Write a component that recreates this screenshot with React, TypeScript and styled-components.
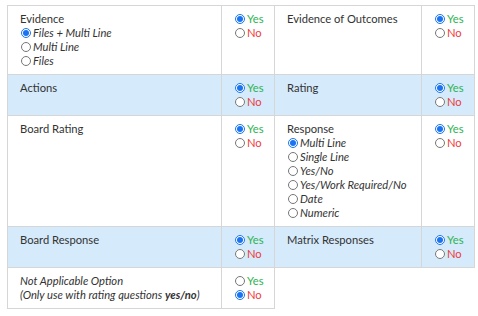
import React from 'react';
import styled, { createGlobalStyle } from 'styled-components';

const GlobalStyle = createGlobalStyle`
    body {
        margin: 0;
        background: #ffffff;
        font-family: Lato, 'Open Sans', sans-serif;
        color: #333333;
    }
`;

const Page = styled.div`
    padding: 5px 0 0 7px;
`;

const Settings_Table = styled.table`
    border-collapse: collapse;
    table-layout: fixed;
    width: 468px;
    font-size: 11.2px;
    line-height: 14px;
`;

const Row = styled.tr<{ $shaded?: boolean }>`
    background: ${(p) => (p.$shaded ? '#d5eafb' : '#ffffff')};
`;

const Cell = styled.td`
    border: 1px solid #d6d6d6;
    padding: 6px 12px 6px 12px;
    vertical-align: top;
    white-space: nowrap;
`;

const Choice_Cell = styled(Cell)`
    padding-left: 12px;
    padding-right: 4px;
`;

const Option = styled.label<{ $tone?: 'yes' | 'no' }>`
    display: flex;
    align-items: center;
    height: 14px;
    white-space: nowrap;
    font-style: ${(p) => (p.$tone ? 'normal' : 'italic')};
    color: ${(p) => (p.$tone === 'yes' ? '#2fb34f' : p.$tone === 'no' ? '#ee3a3a' : '#333333')};
`;

const Radio = styled.input`
    width: 10px;
    height: 10px;
    margin: 0 2px 0 1px;
    accent-color: #1a73f0;
`;

const Muted = styled.div`
    font-style: italic;
`;

type YesNoProps = { name: string; value?: 'yes' | 'no' };

function YesNo({ name, value = 'yes' }: YesNoProps) {
    return (
        <>
            <Option $tone="yes">
                <Radio type="radio" name={name} defaultChecked={value === 'yes'} />
                Yes
            </Option>
            <Option $tone="no">
                <Radio type="radio" name={name} defaultChecked={value === 'no'} />
                No
            </Option>
        </>
    );
}

function Choices({ name, items }: { name: string; items: string[] }) {
    return (
        <>
            {items.map((item, i) => (
                <Option key={item}>
                    <Radio type="radio" name={name} defaultChecked={i === 0} />
                    {item}
                </Option>
            ))}
        </>
    );
}

export default function App() {
    return (
        <Page>
            <GlobalStyle />
            <Settings_Table>
                <colgroup>
                    <col style={{ width: 214 }} />
                    <col style={{ width: 53 }} />
                    <col style={{ width: 147 }} />
                    <col style={{ width: 53 }} />
                </colgroup>
                <tbody>
                    <Row>
                        <Cell>
                            <div>Evidence</div>
                            <Choices name="evidence" items={['Files + Multi Line', 'Multi Line', 'Files']} />
                        </Cell>
                        <Choice_Cell>
                            <YesNo name="evidence_on" />
                        </Choice_Cell>
                        <Cell>Evidence of Outcomes</Cell>
                        <Choice_Cell>
                            <YesNo name="outcomes_on" />
                        </Choice_Cell>
                    </Row>
                    <Row $shaded>
                        <Cell>Actions</Cell>
                        <Choice_Cell>
                            <YesNo name="actions_on" />
                        </Choice_Cell>
                        <Cell>Rating</Cell>
                        <Choice_Cell>
                            <YesNo name="rating_on" />
                        </Choice_Cell>
                    </Row>
                    <Row>
                        <Cell>Board Rating</Cell>
                        <Choice_Cell>
                            <YesNo name="board_rating_on" />
                        </Choice_Cell>
                        <Cell>
                            <div>Response</div>
                            <Choices
                                name="response"
                                items={['Multi Line', 'Single Line', 'Yes/No', 'Yes/Work Required/No', 'Date', 'Numeric']}
                            />
                        </Cell>
                        <Choice_Cell>
                            <YesNo name="response_on" />
                        </Choice_Cell>
                    </Row>
                    <Row $shaded>
                        <Cell>Board Response</Cell>
                        <Choice_Cell>
                            <YesNo name="board_response_on" />
                        </Choice_Cell>
                        <Cell>Matrix Responses</Cell>
                        <Choice_Cell>
                            <YesNo name="matrix_on" />
                        </Choice_Cell>
                    </Row>
                    <Row>
                        <Cell>
                            <Muted>Not Applicable Option</Muted>
                            <Muted>
                                (Only use with rating questions <b>yes/no</b>)
                            </Muted>
                        </Cell>
                        <Choice_Cell>
                            <YesNo name="na_on" value="no" />
                        </Choice_Cell>
                    </Row>
                </tbody>
            </Settings_Table>
        </Page>
    );
}
